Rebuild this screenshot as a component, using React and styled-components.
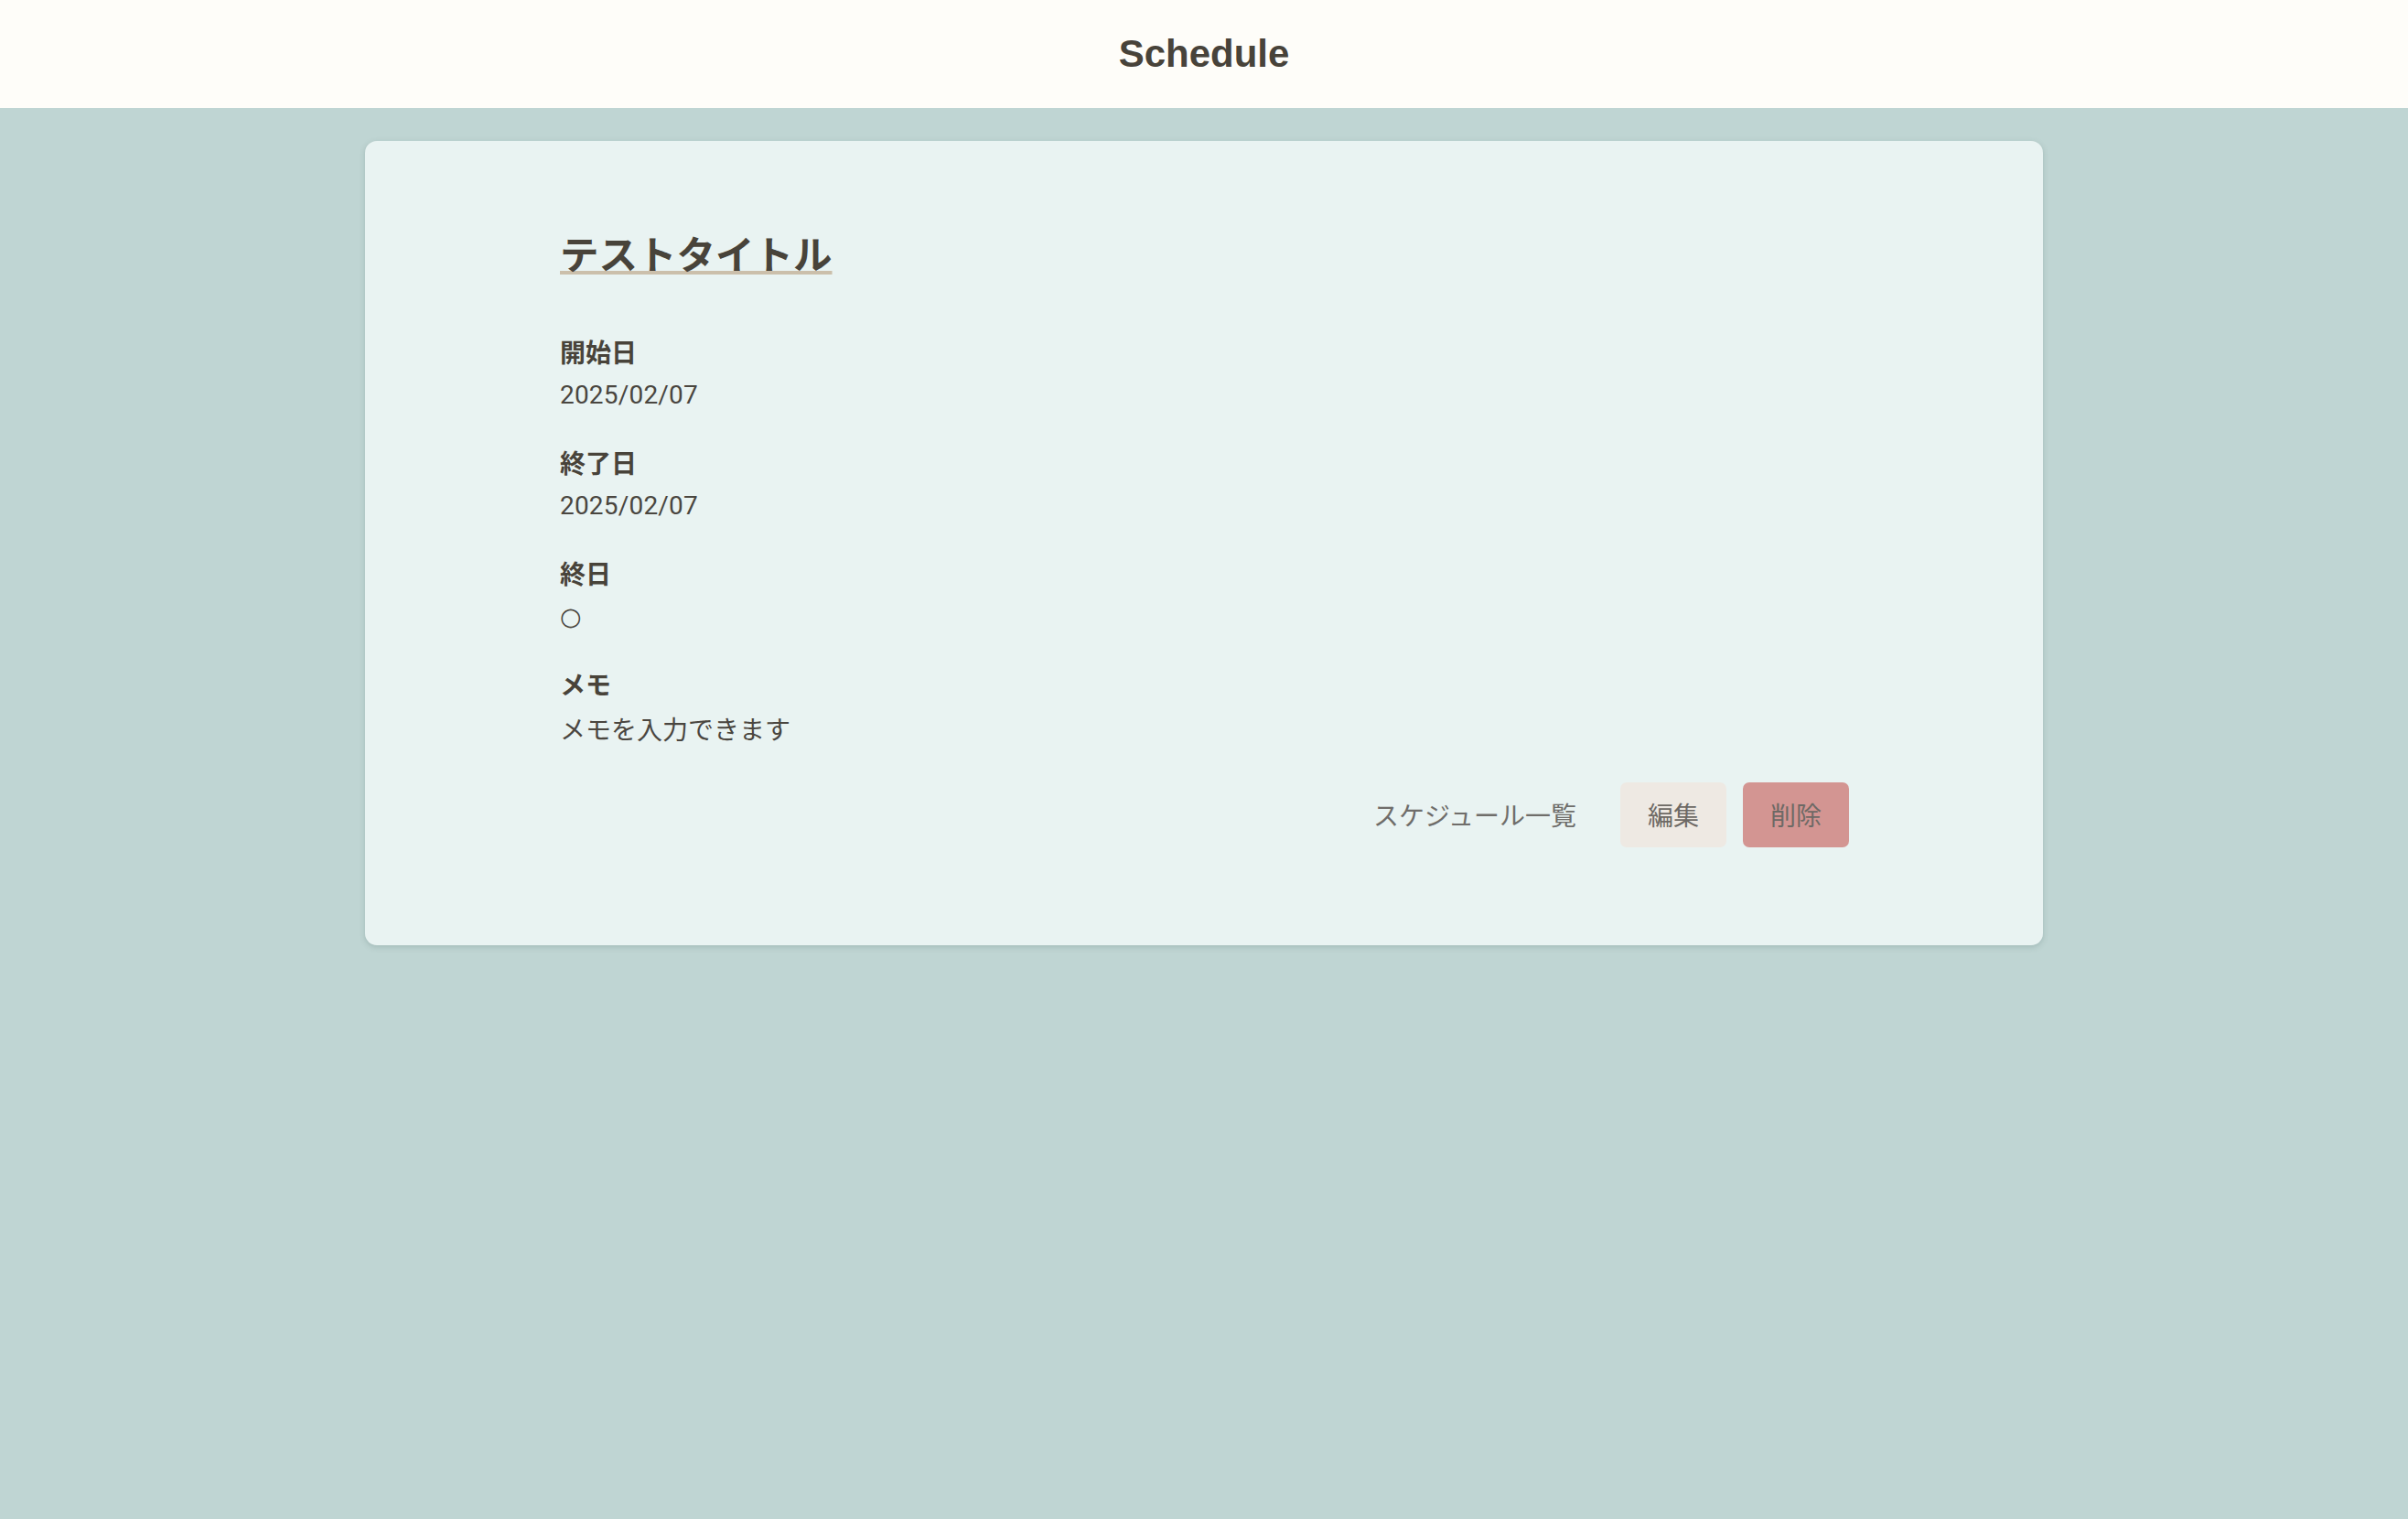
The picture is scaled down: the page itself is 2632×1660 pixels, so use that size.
import React from "react";
import styled, { createGlobalStyle } from "styled-components";

const GlobalStyle = createGlobalStyle`
  html, body {
    margin: 0;
    padding: 0;
    background: #bfd5d3;
    min-height: 100%;
  }
  body {
    font-family: "Roboto", "Noto Sans CJK JP", sans-serif;
    color: #48433a;
  }
  * { box-sizing: border-box; }
`;

const Page = styled.div`
  min-height: 1660px;
  background: #bfd5d3;
`;

const Header = styled.header`
  height: 118px;
  background: #fefdf9;
  display: flex;
  align-items: center;
  justify-content: center;
`;

const HeaderTitle = styled.h1`
  margin: 0;
  font-family: "Liberation Sans", "Noto Sans CJK JP", sans-serif;
  font-weight: 700;
  font-size: 42px;
  color: #48433a;
`;

const Main = styled.main`
  padding: 36px 0;
`;

const Card = styled.section`
  width: 1834px;
  margin: 0 auto;
  background: #e9f3f2;
  border-radius: 13px;
  box-shadow: 0 2px 6px rgba(60, 90, 88, 0.22);
  padding: 90px 212px 107px 213px;
  display: flex;
  flex-direction: column;
`;

const Title = styled.h2`
  margin: 0 0 56px;
  font-family: "Noto Sans CJK JP", sans-serif;
  font-size: 42.5px;
  line-height: 63px;
  font-weight: 700;
  color: #48433a;
  align-self: flex-start;
  text-decoration: underline;
  text-decoration-color: #cbbfab;
  text-decoration-thickness: 4px;
  text-underline-offset: 2px;
`;

const Fields = styled.dl`
  margin: 0;
  display: flex;
  flex-direction: column;
  gap: 31px;
`;

const Field = styled.div`
  display: flex;
  flex-direction: column;
`;

const Label = styled.dt`
  font-family: "Noto Sans CJK JP", sans-serif;
  font-size: 28px;
  line-height: 42px;
  font-weight: 700;
  margin: 0 0 6px;
  color: #48433a;
`;

const Value = styled.dd`
  margin: 0;
  padding-top: ${(p) => (p.$kind === "text" ? "4px" : "0")};
  font-family: ${(p) =>
    p.$kind === "symbol"
      ? '"DejaVu Sans", "Noto Sans CJK JP", sans-serif'
      : '"Roboto", "Noto Sans CJK JP", sans-serif'};
  font-size: ${(p) => (p.$kind === "symbol" ? "27px" : "28px")};
  letter-spacing: ${(p) => (p.$kind === "date" ? "0.2px" : "0")};
  line-height: 42px;
  font-weight: ${(p) => (p.$kind === "symbol" ? 700 : 400)};
  color: #4a4640;
`;

const Actions = styled.div`
  margin-top: 35px;
  display: flex;
  justify-content: flex-end;
  gap: 18px;
`;

const Button = styled.button`
  font-family: "Noto Sans CJK JP", sans-serif;
  font-size: 28px;
  line-height: 43px;
  padding: 14px 30px;
  border: none;
  border-radius: 7px;
  cursor: pointer;
  color: ${(p) => (p.$variant === "link" ? "#6f6d6a" : "#6d6965")};
  background: ${(p) =>
    p.$variant === "danger"
      ? "#d39592"
      : p.$variant === "secondary"
      ? "#eee9e3"
      : "transparent"};
`;

const fields = [
  { label: "開始日", value: "2025/02/07", kind: "date" },
  { label: "終了日", value: "2025/02/07", kind: "date" },
  { label: "終日", value: "○", kind: "symbol" },
  { label: "メモ", value: "メモを入力できます", kind: "text" },
];

export default function App() {
  return (
    <>
      <GlobalStyle />
      <Page>
        <Header>
          <HeaderTitle>Schedule</HeaderTitle>
        </Header>
        <Main>
          <Card>
            <Title>テストタイトル</Title>
            <Fields>
              {fields.map((f) => (
                <Field key={f.label}>
                  <Label>{f.label}</Label>
                  <Value $kind={f.kind}>{f.value}</Value>
                </Field>
              ))}
            </Fields>
            <Actions>
              <Button $variant="link">スケジュール一覧</Button>
              <Button $variant="secondary">編集</Button>
              <Button $variant="danger">削除</Button>
            </Actions>
          </Card>
        </Main>
      </Page>
    </>
  );
}
